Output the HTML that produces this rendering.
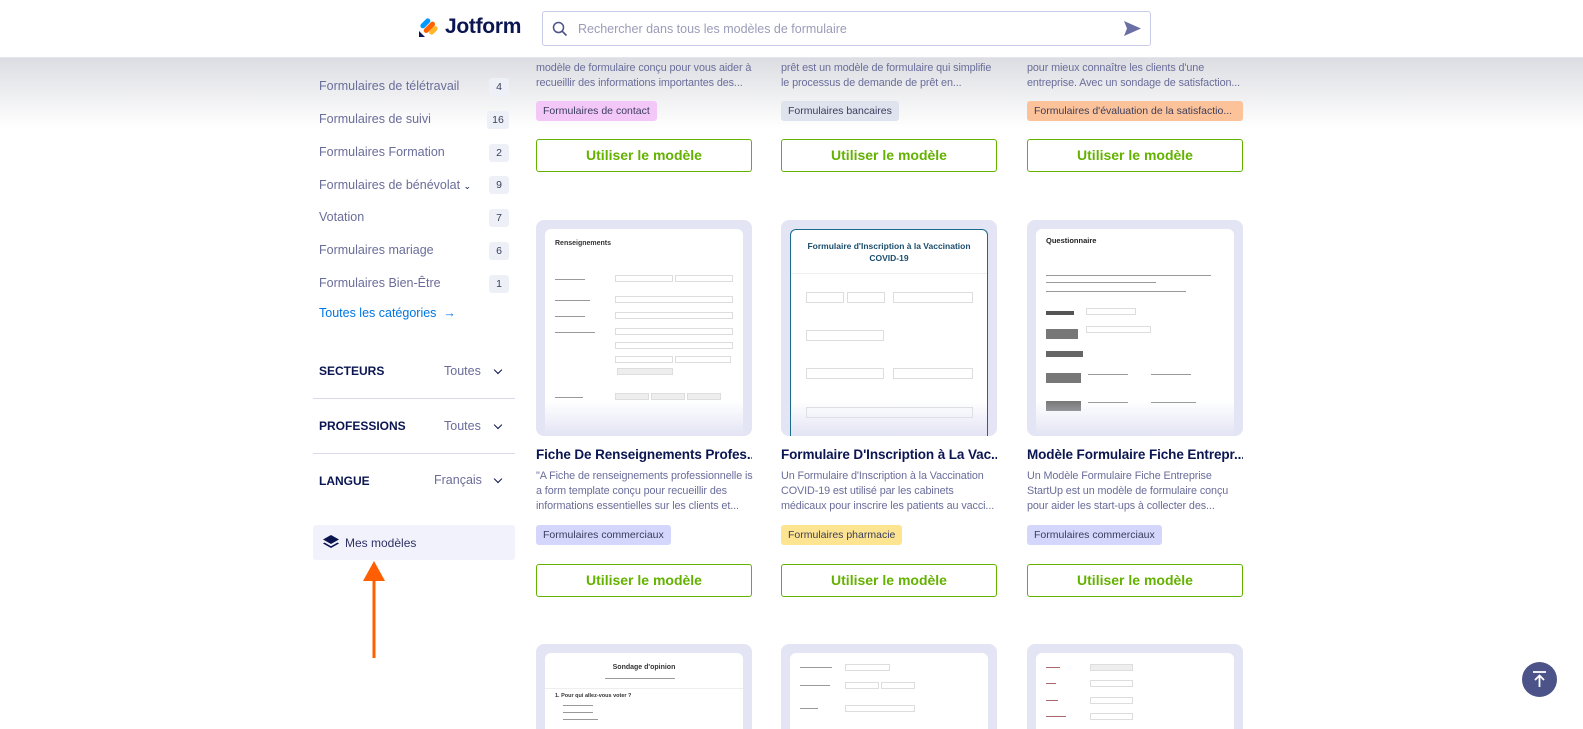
<!DOCTYPE html>
<html><head><meta charset="utf-8"><style>
*{box-sizing:border-box;margin:0;padding:0}
html,body{width:1583px;height:729px;overflow:hidden}
body{background:#fff;font-family:"Liberation Sans",sans-serif;position:relative}
.abs{position:absolute}
.hdr{left:0;top:0;width:1583px;height:58px;background:#fff;border-bottom:1px solid #e4e5ee;z-index:5}
.shadow{left:0;top:58px;width:1583px;height:70px;background:linear-gradient(#dcdde2,rgba(255,255,255,0));z-index:1}
.side{font-size:12.5px;color:#6a6d9a}
.item{position:absolute;left:319px;z-index:2}
.badge{position:absolute;left:489px;width:20px;height:18px;background:#eef0f8;border-radius:3px;font-size:10.5px;color:#3a3d5c;text-align:center;line-height:18px;z-index:2}
.sec{position:absolute;left:319px;font-size:12px;font-weight:bold;color:#0a1551}
.val{position:absolute;font-size:12.5px;color:#6a6d9a}
.chev{position:absolute;left:495px;width:6px;height:6px;border-right:1.6px solid #0a1551;border-bottom:1.6px solid #0a1551;transform:rotate(45deg)}
.hr{position:absolute;left:313px;width:202px;height:1px;background:#d8daeb}
.desc{position:absolute;font-size:10.8px;line-height:15px;color:#6a6d9a;white-space:nowrap;z-index:2;letter-spacing:-0.1px}
.tag{position:absolute;height:20px;border-radius:3px;font-size:10.5px;color:#3a3d5c;line-height:20px;padding:0 7px;white-space:nowrap;z-index:2}
.btn{position:absolute;width:216px;height:33px;border:1.5px solid #64b200;border-radius:3px;color:#64b200;font-weight:bold;font-size:14px;text-align:center;line-height:30px;background:#fff;z-index:2}
.img{position:absolute;width:216px;height:216px;background:#e3e4f4;border-radius:8px;overflow:hidden}
.img.s{height:85px;border-radius:8px 8px 0 0}
.img .in{position:absolute;left:9px;top:9px;right:9px;bottom:0;background:#fff;border-radius:6px 6px 0 0;overflow:hidden}
.title{position:absolute;font-size:13.5px;font-weight:bold;color:#0a1551;white-space:nowrap;width:216px;overflow:hidden;letter-spacing:-0.1px}
.l{position:absolute;height:2px;background:#999}
.f{position:absolute;height:7px;border:1px solid #ddd}
.fade{position:absolute;left:0;right:0;bottom:0;height:35px;background:linear-gradient(rgba(227,228,244,0),#e3e4f4)}
</style></head><body>
<div class="abs hdr">
 <svg class="abs" style="left:419px;top:17px" width="20" height="21" viewBox="0 0 20 21"><rect x="4" y="0" width="5" height="12" rx="2.5" transform="rotate(45 6 6)" fill="#0099ff"/><rect x="8" y="3" width="5" height="14" rx="2.5" transform="rotate(45 10 10)" fill="#ff6100"/><rect x="12" y="8" width="5" height="10" rx="2.5" transform="rotate(45 14 13)" fill="#ffb629"/><path d="M0 14 L0 20 L6 20 Z" fill="#0a1551"/></svg>
 <div class="abs" style="left:445px;top:15px;font-size:21px;font-weight:bold;color:#0a1551;letter-spacing:-0.3px">Jotform</div>
 <div class="abs" style="left:542px;top:11px;width:609px;height:35px;border:1px solid #c8cbe8;border-radius:3px"></div>
 <svg class="abs" style="left:552px;top:21px" width="16" height="16" viewBox="0 0 16 16"><circle cx="6.5" cy="6.5" r="5" fill="none" stroke="#4b5389" stroke-width="1.5"/><path d="M10.3 10.3 L14.5 14.5" stroke="#4b5389" stroke-width="1.6"/></svg>
 <div class="abs" style="left:578px;top:22px;font-size:12.5px;color:#9a9cb8">Rechercher dans tous les modèles de formulaire</div>
 <svg class="abs" style="left:1124px;top:21px" width="17" height="15" viewBox="0 0 17 15"><path d="M0 0 L17 7.5 L0 15 L3 7.5 Z" fill="#6a6fa6"/></svg>
</div>
<div class="abs shadow"></div>

<div class="side">
<div class="item" style="top:79px">Formulaires de télétravail</div><div class="badge" style="top:78px">4</div>
<div class="item" style="top:112px">Formulaires de suivi</div><div class="badge" style="top:111px;left:487px;width:22px">16</div>
<div class="item" style="top:145px">Formulaires Formation</div><div class="badge" style="top:144px">2</div>
<div class="item" style="top:178px">Formulaires de bénévolat <span style="font-size:9px;color:#0a1551">⌄</span></div><div class="badge" style="top:176px">9</div>
<div class="item" style="top:210px">Votation</div><div class="badge" style="top:209px">7</div>
<div class="item" style="top:243px">Formulaires mariage</div><div class="badge" style="top:242px">6</div>
<div class="item" style="top:276px">Formulaires Bien-Être</div><div class="badge" style="top:275px">1</div>
<div class="item" style="top:306px;color:#0075e3">Toutes les catégories &nbsp;→</div>
</div>
<div class="sec" style="top:364px">SECTEURS</div><div class="val" style="left:444px;top:364px">Toutes</div><div class="chev" style="top:367px"></div>
<div class="hr" style="top:398px"></div>
<div class="sec" style="top:419px">PROFESSIONS</div><div class="val" style="left:444px;top:419px">Toutes</div><div class="chev" style="top:422px"></div>
<div class="hr" style="top:453px"></div>
<div class="sec" style="top:474px">LANGUE</div><div class="val" style="left:434px;top:473px">Français</div><div class="chev" style="top:476px"></div>
<div class="abs" style="left:313px;top:525px;width:202px;height:35px;background:#f1f2fb;border-radius:3px"></div>
<svg class="abs" style="left:323px;top:535px" width="16" height="15" viewBox="0 0 16 15"><path d="M8 0 L16 4.5 L8 9 L0 4.5Z" fill="#0a1551"/><path d="M1.5 7.5 L8 11.2 L14.5 7.5 L16 8.5 L8 13 L0 8.5Z" fill="#0a1551"/></svg>
<div class="abs" style="left:345px;top:536px;font-size:12px;color:#2f3263">Mes modèles</div>
<svg class="abs" style="left:362px;top:560px" width="24" height="100" viewBox="0 0 24 100"><path d="M12 1 L23 21 L1 21Z" fill="#ff5f00"/><rect x="10.5" y="18" width="3" height="80" fill="#ff5f00"/></svg>

<div class="desc" style="left:536px;top:61px">modèle de formulaire conçu pour vous aider à<br>recueillir des informations importantes des...</div>
<div class="tag" style="left:536px;top:101px;background:#f3c8f8">Formulaires de contact</div>
<div class="btn" style="left:536px;top:139px">Utiliser le modèle</div>
<div class="desc" style="left:781px;top:61px">prêt est un modèle de formulaire qui simplifie<br>le processus de demande de prêt en...</div>
<div class="tag" style="left:781px;top:101px;background:#dfe3ee">Formulaires bancaires</div>
<div class="btn" style="left:781px;top:139px">Utiliser le modèle</div>
<div class="desc" style="left:1027px;top:61px">pour mieux connaître les clients d'une<br>entreprise. Avec un sondage de satisfaction...</div>
<div class="tag" style="left:1027px;top:101px;background:#fcc39a;width:216px;overflow:hidden">Formulaires d'évaluation de la satisfactio...</div>
<div class="btn" style="left:1027px;top:139px">Utiliser le modèle</div>

<div class="img" style="left:536px;top:220px"><div class="in">
 <div class="abs" style="left:10px;top:11px;font-size:7px;font-weight:bold;color:#333">Renseignements</div>
 <div class="l" style="left:10px;top:50px;width:30px;height:1px"></div><div class="f" style="left:70px;top:46px;width:58px"></div><div class="f" style="left:130px;top:46px;width:58px"></div>
 <div class="l" style="left:10px;top:71px;width:35px;height:1px"></div><div class="f" style="left:70px;top:67px;width:118px"></div>
 <div class="l" style="left:10px;top:87px;width:30px;height:1px"></div><div class="f" style="left:70px;top:83px;width:118px"></div>
 <div class="l" style="left:10px;top:103px;width:40px;height:1px"></div><div class="f" style="left:70px;top:99px;width:118px"></div><div class="f" style="left:70px;top:113px;width:118px"></div><div class="f" style="left:70px;top:127px;width:58px"></div><div class="f" style="left:130px;top:127px;width:56px"></div>
 <div class="f" style="left:72px;top:139px;width:56px;background:#eee"></div>
 <div class="l" style="left:10px;top:168px;width:28px;height:1px"></div><div class="f" style="left:70px;top:164px;width:34px;background:#eee"></div><div class="f" style="left:106px;top:164px;width:34px;background:#eee"></div><div class="f" style="left:142px;top:164px;width:34px;background:#eee"></div>
 <div class="fade"></div></div></div>
<div class="img" style="left:781px;top:220px"><div class="in" style="border:1.5px solid #1a6a8e;border-bottom:none">
 <div class="abs" style="left:0;right:0;top:10px;text-align:center;font-size:8.5px;font-weight:bold;color:#1a4d6e;line-height:12px">Formulaire d'Inscription à la Vaccination<br>COVID-19</div>
 <div class="abs" style="left:0;right:0;top:43px;height:1px;background:#eee"></div>
 <div class="f" style="left:15px;top:62px;width:38px;height:11px"></div><div class="f" style="left:56px;top:62px;width:38px;height:11px"></div><div class="f" style="left:102px;top:62px;width:80px;height:11px"></div>
 <div class="f" style="left:15px;top:100px;width:78px;height:11px"></div>
 <div class="f" style="left:15px;top:138px;width:78px;height:11px"></div><div class="f" style="left:102px;top:138px;width:80px;height:11px"></div>
 <div class="f" style="left:15px;top:177px;width:167px;height:11px"></div>
 <div class="fade"></div></div></div>
<div class="img" style="left:1027px;top:220px"><div class="in">
 <div class="abs" style="left:10px;top:7px;font-size:7.5px;font-weight:bold;color:#222">Questionnaire</div>
 <div class="l" style="left:10px;top:46px;width:165px;height:1px"></div><div class="l" style="left:10px;top:53px;width:110px;height:1px"></div><div class="l" style="left:10px;top:62px;width:140px;height:1px"></div>
 <div class="l" style="left:10px;top:82px;width:28px;height:4px;background:#555"></div><div class="f" style="left:50px;top:79px;width:50px"></div>
 <div class="l" style="left:10px;top:100px;width:32px;height:10px;background:#777"></div><div class="f" style="left:50px;top:97px;width:65px"></div>
 <div class="l" style="left:10px;top:122px;width:37px;height:6px;background:#666"></div>
 <div class="l" style="left:10px;top:144px;width:35px;height:10px;background:#777"></div><div class="l" style="left:52px;top:145px;width:40px;height:1px"></div><div class="l" style="left:115px;top:145px;width:40px;height:1px"></div>
 <div class="l" style="left:10px;top:172px;width:35px;height:10px;background:#777"></div><div class="l" style="left:52px;top:173px;width:40px;height:1px"></div><div class="l" style="left:115px;top:173px;width:45px;height:1px"></div>
 <div class="fade"></div></div></div>

<div class="title" style="left:536px;top:447px">Fiche De Renseignements Profes...</div>
<div class="title" style="left:781px;top:447px">Formulaire D'Inscription à La Vac...</div>
<div class="title" style="left:1027px;top:447px">Modèle Formulaire Fiche Entrepr...</div>
<div class="desc" style="left:536px;top:469px">"A Fiche de renseignements professionnelle is<br>a form template conçu pour recueillir des<br>informations essentielles sur les clients et...</div>
<div class="desc" style="left:781px;top:469px">Un Formulaire d'Inscription à la Vaccination<br>COVID-19 est utilisé par les cabinets<br>médicaux pour inscrire les patients au vacci...</div>
<div class="desc" style="left:1027px;top:469px">Un Modèle Formulaire Fiche Entreprise<br>StartUp est un modèle de formulaire conçu<br>pour aider les start-ups à collecter des...</div>
<div class="tag" style="left:536px;top:525px;background:#d5d6fb">Formulaires commerciaux</div>
<div class="tag" style="left:781px;top:525px;background:#fde490">Formulaires pharmacie</div>
<div class="tag" style="left:1027px;top:525px;background:#d5d6fb">Formulaires commerciaux</div>
<div class="btn" style="left:536px;top:564px">Utiliser le modèle</div>
<div class="btn" style="left:781px;top:564px">Utiliser le modèle</div>
<div class="btn" style="left:1027px;top:564px">Utiliser le modèle</div>

<div class="img s" style="left:536px;top:644px"><div class="in">
 <div class="abs" style="left:0;right:0;top:11px;text-align:center;font-size:7px;font-weight:bold;color:#333">Sondage d'opinion</div>
 <div class="l" style="left:60px;top:25px;width:70px;height:1px"></div>
 <div class="l" style="left:0;right:0;top:35px;height:1px;background:#eee"></div>
 <div class="abs" style="left:10px;top:40px;font-size:5.5px;font-weight:bold;color:#333">1. Pour qui allez-vous voter ?</div>
 <div class="l" style="left:18px;top:52px;width:30px;height:1px"></div><div class="l" style="left:18px;top:59px;width:30px;height:1px"></div><div class="l" style="left:18px;top:66px;width:35px;height:1px"></div>
</div></div>
<div class="img s" style="left:781px;top:644px"><div class="in">
 <div class="l" style="left:10px;top:14px;width:32px;height:1px"></div><div class="f" style="left:55px;top:11px;width:45px"></div>
 <div class="l" style="left:10px;top:32px;width:30px;height:1px"></div><div class="f" style="left:55px;top:29px;width:34px"></div><div class="f" style="left:91px;top:29px;width:34px"></div>
 <div class="l" style="left:10px;top:55px;width:18px;height:1px"></div><div class="f" style="left:55px;top:52px;width:70px"></div>
</div></div>
<div class="img s" style="left:1027px;top:644px"><div class="in">
 <div class="l" style="left:10px;top:14px;width:14px;height:1px;background:#a66"></div><div class="f" style="left:54px;top:11px;width:43px;background:#eee"></div>
 <div class="l" style="left:10px;top:30px;width:10px;height:1px;background:#a66"></div><div class="f" style="left:54px;top:27px;width:43px"></div>
 <div class="l" style="left:10px;top:47px;width:12px;height:1px;background:#a66"></div><div class="f" style="left:54px;top:44px;width:43px"></div>
 <div class="l" style="left:10px;top:63px;width:20px;height:1px;background:#a66"></div><div class="f" style="left:54px;top:60px;width:43px"></div>
</div></div>

<div class="abs" style="left:1522px;top:662px;width:35px;height:35px;border-radius:50%;background:#4b5389"></div>
<svg class="abs" style="left:1530px;top:670px" width="19" height="19" viewBox="0 0 19 19"><path d="M3 2 H16" stroke="#fff" stroke-width="1.8"/><path d="M9.5 17 V6 M5 10 L9.5 5.5 L14 10" stroke="#fff" stroke-width="1.8" fill="none"/></svg>
</body></html>
